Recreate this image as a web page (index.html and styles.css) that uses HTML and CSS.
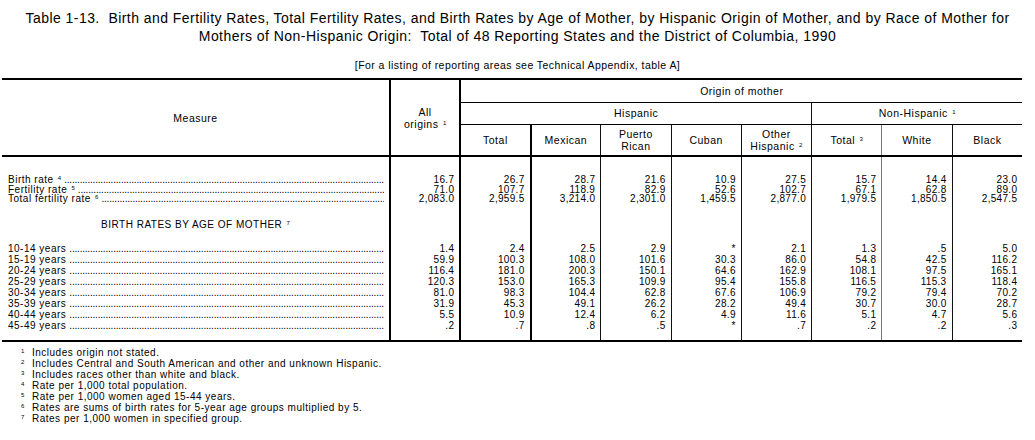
FILE: index.html
```html
<!DOCTYPE html>
<html lang="en">
<head>
<meta charset="utf-8">
<title>Table 1-13</title>
<link rel="stylesheet" href="styles.css">
</head>
<body>
<div class="page">
  <h1 class="title">Table 1-13.&nbsp; Birth and Fertility Rates, Total Fertility Rates, and Birth Rates by Age of Mother, by Hispanic Origin of Mother, and by Race of Mother for<br>Mothers of Non-Hispanic Origin:&nbsp; Total of 48 Reporting States and the District of Columbia, 1990</h1>
  <p class="note">[For a listing of reporting areas see Technical Appendix, table A]</p>

  <table class="data">
    <colgroup>
      <col class="c-measure">
      <col class="c-num">
      <col class="c-num"><col class="c-num"><col class="c-num"><col class="c-num">
      <col class="c-num"><col class="c-num"><col class="c-num"><col class="c-num">
    </colgroup>
    <thead>
      <tr class="h-row1">
        <th rowspan="3" class="measure">Measure</th>
        <th rowspan="3" class="all bl2">All<br>origins <sup class="sup">1</sup></th>
        <th colspan="8" class="bl2 under">Origin of mother</th>
      </tr>
      <tr class="h-row2">
        <th colspan="5" class="bl2 under">Hispanic</th>
        <th colspan="3" class="bl1 under">Non-Hispanic <sup class="sup">1</sup></th>
      </tr>
      <tr class="h-row3">
        <th class="bl2">Total</th>
        <th class="bl2">Mexican</th>
        <th class="bl1">Puerto<br>Rican</th>
        <th class="bl1">Cuban</th>
        <th class="bl1">Other<br>Hispanic <sup class="sup">2</sup></th>
        <th class="bl1">Total <sup class="sup">3</sup></th>
        <th class="blg">White</th>
        <th class="bl1">Black</th>
      </tr>
    </thead>
    <tbody>
      <tr class="sp sp1"><td></td><td class="bl2"></td><td class="bl2"></td><td class="bl2"></td><td class="bl1"></td><td class="bl1"></td><td class="bl1"></td><td class="bl1"></td><td class="blg"></td><td class="bl1"></td></tr>
      <tr class="row-a">
        <td class="lbl"><div class="lead"><span class="lt">Birth rate <sup class="sup">4</sup></span></div></td>
        <td class="bl2">16.7</td><td class="bl2">26.7</td><td class="bl2">28.7</td><td class="bl1">21.6</td><td class="bl1">10.9</td><td class="bl1">27.5</td><td class="bl1">15.7</td><td class="blg">14.4</td><td class="bl1">23.0</td>
      </tr>
      <tr class="row-a">
        <td class="lbl"><div class="lead"><span class="lt">Fertility rate <sup class="sup">5</sup></span></div></td>
        <td class="bl2">71.0</td><td class="bl2">107.7</td><td class="bl2">118.9</td><td class="bl1">82.9</td><td class="bl1">52.6</td><td class="bl1">102.7</td><td class="bl1">67.1</td><td class="blg">62.8</td><td class="bl1">89.0</td>
      </tr>
      <tr class="row-a">
        <td class="lbl"><div class="lead"><span class="lt">Total fertility rate <sup class="sup">6</sup></span></div></td>
        <td class="bl2">2,083.0</td><td class="bl2">2,959.5</td><td class="bl2">3,214.0</td><td class="bl1">2,301.0</td><td class="bl1">1,459.5</td><td class="bl1">2,877.0</td><td class="bl1">1,979.5</td><td class="blg">1,850.5</td><td class="bl1">2,547.5</td>
      </tr>
      <tr class="sp sp2"><td></td><td class="bl2"></td><td class="bl2"></td><td class="bl2"></td><td class="bl1"></td><td class="bl1"></td><td class="bl1"></td><td class="bl1"></td><td class="blg"></td><td class="bl1"></td></tr>
      <tr class="sec">
        <td class="sec-h">BIRTH RATES BY AGE OF MOTHER <sup class="sup">7</sup></td>
        <td class="bl2"></td><td class="bl2"></td><td class="bl2"></td><td class="bl1"></td><td class="bl1"></td><td class="bl1"></td><td class="bl1"></td><td class="blg"></td><td class="bl1"></td>
      </tr>
      <tr class="sp sp3"><td></td><td class="bl2"></td><td class="bl2"></td><td class="bl2"></td><td class="bl1"></td><td class="bl1"></td><td class="bl1"></td><td class="bl1"></td><td class="blg"></td><td class="bl1"></td></tr>
      <tr class="row-b">
        <td class="lbl"><div class="lead"><span class="lt">10-14 years</span></div></td>
        <td class="bl2">1.4</td><td class="bl2">2.4</td><td class="bl2">2.5</td><td class="bl1">2.9</td><td class="bl1">*</td><td class="bl1">2.1</td><td class="bl1">1.3</td><td class="blg">.5</td><td class="bl1">5.0</td>
      </tr>
      <tr class="row-b">
        <td class="lbl"><div class="lead"><span class="lt">15-19 years</span></div></td>
        <td class="bl2">59.9</td><td class="bl2">100.3</td><td class="bl2">108.0</td><td class="bl1">101.6</td><td class="bl1">30.3</td><td class="bl1">86.0</td><td class="bl1">54.8</td><td class="blg">42.5</td><td class="bl1">116.2</td>
      </tr>
      <tr class="row-b">
        <td class="lbl"><div class="lead"><span class="lt">20-24 years</span></div></td>
        <td class="bl2">116.4</td><td class="bl2">181.0</td><td class="bl2">200.3</td><td class="bl1">150.1</td><td class="bl1">64.6</td><td class="bl1">162.9</td><td class="bl1">108.1</td><td class="blg">97.5</td><td class="bl1">165.1</td>
      </tr>
      <tr class="row-b">
        <td class="lbl"><div class="lead"><span class="lt">25-29 years</span></div></td>
        <td class="bl2">120.3</td><td class="bl2">153.0</td><td class="bl2">165.3</td><td class="bl1">109.9</td><td class="bl1">95.4</td><td class="bl1">155.8</td><td class="bl1">116.5</td><td class="blg">115.3</td><td class="bl1">118.4</td>
      </tr>
      <tr class="row-b">
        <td class="lbl"><div class="lead"><span class="lt">30-34 years</span></div></td>
        <td class="bl2">81.0</td><td class="bl2">98.3</td><td class="bl2">104.4</td><td class="bl1">62.8</td><td class="bl1">67.6</td><td class="bl1">106.9</td><td class="bl1">79.2</td><td class="blg">79.4</td><td class="bl1">70.2</td>
      </tr>
      <tr class="row-b">
        <td class="lbl"><div class="lead"><span class="lt">35-39 years</span></div></td>
        <td class="bl2">31.9</td><td class="bl2">45.3</td><td class="bl2">49.1</td><td class="bl1">26.2</td><td class="bl1">28.2</td><td class="bl1">49.4</td><td class="bl1">30.7</td><td class="blg">30.0</td><td class="bl1">28.7</td>
      </tr>
      <tr class="row-b">
        <td class="lbl"><div class="lead"><span class="lt">40-44 years</span></div></td>
        <td class="bl2">5.5</td><td class="bl2">10.9</td><td class="bl2">12.4</td><td class="bl1">6.2</td><td class="bl1">4.9</td><td class="bl1">11.6</td><td class="bl1">5.1</td><td class="blg">4.7</td><td class="bl1">5.6</td>
      </tr>
      <tr class="row-b">
        <td class="lbl"><div class="lead"><span class="lt">45-49 years</span></div></td>
        <td class="bl2">.2</td><td class="bl2">.7</td><td class="bl2">.8</td><td class="bl1">.5</td><td class="bl1">*</td><td class="bl1">.7</td><td class="bl1">.2</td><td class="blg">.2</td><td class="bl1">.3</td>
      </tr>
      <tr class="sp sp4"><td></td><td class="bl2"></td><td class="bl2"></td><td class="bl2"></td><td class="bl1"></td><td class="bl1"></td><td class="bl1"></td><td class="bl1"></td><td class="blg"></td><td class="bl1"></td></tr>
    </tbody>
  </table>

  <ul class="notes">
    <li class="fn"><span class="mark">1</span>Includes origin not stated.</li>
    <li class="fn"><span class="mark">2</span>Includes Central and South American and other and unknown Hispanic.</li>
    <li class="fn"><span class="mark">3</span>Includes races other than white and black.</li>
    <li class="fn"><span class="mark">4</span>Rate per 1,000 total population.</li>
    <li class="fn"><span class="mark">5</span>Rate per 1,000 women aged 15-44 years.</li>
    <li class="fn"><span class="mark">6</span>Rates are sums of birth rates for 5-year age groups multiplied by 5.</li>
    <li class="fn"><span class="mark">7</span>Rates per 1,000 women in specified group.</li>
  </ul>
</div>
</body>
</html>
```

FILE: styles.css
```css
* { box-sizing: border-box; }

body {
  margin: 0;
  background: #fff;
  color: #000;
  font-family: "Liberation Sans", Arial, sans-serif;
}

.page {
  width: 1035px;
}

.title {
  margin: 0;
  padding-top: 9px;
  font-size: 14px;
  letter-spacing: 0.45px;
  font-weight: normal;
  line-height: 18px;
  text-align: center;
}

.note {
  margin: 14px 0 0;
  font-size: 10.5px;
  letter-spacing: 0.45px;
  line-height: 12px;
  text-align: center;
}

.data {
  margin: 7px 0 0 2px;
  width: 1020px;
  table-layout: fixed;
  border-collapse: collapse;
  border-top: 2px solid #000;
  border-bottom: 2px solid #000;
  font-size: 10px;
  letter-spacing: 0.3px;
}

.c-measure { width: 388px; }
.c-num { width: 70.25px; }

.data th {
  font-weight: normal;
  font-size: 10.5px;
  letter-spacing: 0.5px;
  line-height: 12px;
  padding: 0;
  text-align: center;
  vertical-align: middle;
}

.h-row1 { height: 23px; }
.h-row2 { height: 22px; }
.h-row3 { height: 32px; }

.h-row3 th,
.measure,
.all {
  border-bottom: 2px solid #000;
}

.measure { padding-top: 6px; padding-right: 20px; }
.all { padding-top: 6px; }

.under { border-bottom: 1px solid #000; }

.bl2 { border-left: 2px solid #000; }
.bl1 { border-left: 1px solid #111; }
.blg { border-left: 1px solid #777; }

.data td {
  padding: 0 5px 0 0;
  text-align: right;
  white-space: nowrap;
  vertical-align: middle;
}

.sp1 { height: 19px; }
.sp2 { height: 15px; }
.sp3 { height: 12px; }
.sp4 { height: 10px; }

.row-a { height: 9.5px; line-height: 9.5px; }
.row-b { height: 11.1px; line-height: 11.1px; }

.sec { height: 12px; line-height: 12px; }

.data td.sec-h {
  text-align: center;
  padding: 0;
  font-size: 10px;
  letter-spacing: 0.5px;
}

.data td.lbl {
  padding: 0 5px 0 6px;
  text-align: left;
  letter-spacing: 0.5px;
}

.lead {
  display: flex;
  white-space: nowrap;
}

.lt { flex: none; }

.lead::after {
  content: "..................................................................................................................................................................................................";
  flex: 1;
  min-width: 0;
  overflow: hidden;
  margin-left: 3px;
  letter-spacing: -0.2px;
}

.sup {
  font-size: 6px;
  line-height: 0;
  letter-spacing: 0;
  vertical-align: 3px;
  margin-left: 1px;
}

.notes {
  list-style: none;
  margin: 5px 0 0;
  padding: 0 0 0 21px;
  font-size: 10px;
  letter-spacing: 0.5px;
  line-height: 11px;
}

.fn {
  display: block;
}

.mark {
  display: inline-block;
  width: 11px;
  font-size: 6px;
  letter-spacing: 0;
  line-height: 0;
  vertical-align: 3px;
}
```
